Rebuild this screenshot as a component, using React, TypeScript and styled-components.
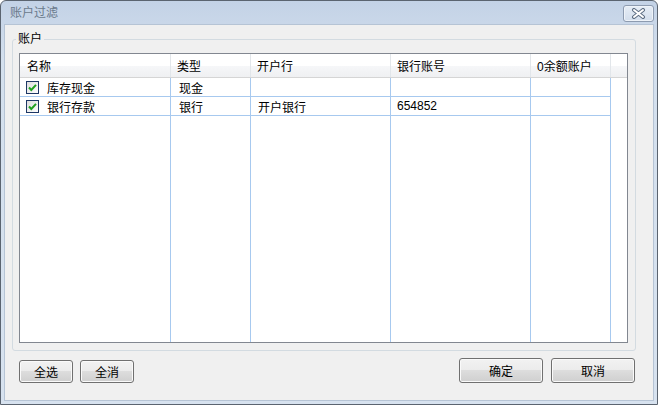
import React from 'react'
import styled, { createGlobalStyle } from 'styled-components'

const GlobalStyle = createGlobalStyle`
  html, body {
    margin: 0;
    padding: 0;
    background: #ffffff;
  }
  body {
    font-family: "Liberation Sans", "Noto Sans CJK SC", sans-serif;
    font-size: 12px;
    color: #000;
  }
`

const Window = styled.div`
  box-sizing: border-box;
  width: 658px;
  height: 405px;
  border: 1px solid #5b6470;
  border-radius: 6px 6px 0 0;
  background: linear-gradient(#c3d2e6, #d4e0ee 60px, #d7e2ef);
  padding: 0 3px 3px;
  display: flex;
  flex-direction: column;
`

const TitleBar = styled.div`
  height: 23px;
  display: flex;
  justify-content: space-between;
  align-items: flex-start;
  padding-left: 6px;
`

const Title = styled.span`
  margin-top: 5px;
  line-height: 14px;
  color: #6a798b;
`

const CloseButton = styled.div`
  box-sizing: border-box;
  width: 31px;
  height: 17px;
  margin-top: 4px;
  border: 1px solid #8d9bb0;
  border-radius: 3px;
  background: linear-gradient(#e6edf6, #d3deec);
  box-shadow: inset 0 0 0 1px #eef3f9;
  display: flex;
  align-items: center;
  justify-content: center;
`

const Client = styled.div`
  flex: 1;
  box-sizing: border-box;
  border: 1px solid #b6c4d5;
  background: #f0f0f0;
  padding: 7px 17px 0 7px;
  display: flex;
  flex-direction: column;
`

const Group = styled.fieldset`
  margin: 0;
  padding: 0;
  border: 1px solid #d3dbe1;
  border-radius: 3px;
  min-width: 0;
`

const Legend = styled.legend`
  margin-left: 3px;
  padding: 0 2px;
  line-height: 14px;
`

const ListView = styled.div`
  box-sizing: border-box;
  width: 609px;
  height: 290px;
  margin: 7px 7px 7px 6px;
  border: 1px solid #828790;
  background: #ffffff;
  display: flex;
  flex-direction: column;
`

const Header = styled.div`
  box-sizing: border-box;
  height: 24px;
  display: flex;
  border-bottom: 1px solid #d5d5d5;
  background: linear-gradient(#ffffff 0%, #ffffff 50%, #f6f7f9 50%, #eff0f2 100%);
`

const HeaderCell = styled.div<{ $w: number; $pad?: number }>`
  box-sizing: border-box;
  width: ${p => p.$w}px;
  padding-left: ${p => p.$pad ?? 6}px;
  border-right: 1px solid #e2e6ea;
  display: flex;
  align-items: center;
  white-space: nowrap;
`

const Body = styled.div`
  flex: 1;
  display: flex;
`

const Column = styled.div<{ $w: number }>`
  box-sizing: border-box;
  width: ${p => p.$w}px;
  border-right: 1px solid #a7c9ef;
  display: flex;
  flex-direction: column;
`

const Cell = styled.div<{ $pad?: number }>`
  box-sizing: border-box;
  height: 19px;
  padding-left: ${p => p.$pad ?? 7}px;
  border-bottom: 1px solid #a7c9ef;
  display: flex;
  align-items: center;
  white-space: nowrap;
`

const Check = styled.span`
  width: 13px;
  height: 13px;
  margin-right: 8px;
  display: inline-flex;
`

const Footer = styled.div`
  margin-top: 7px;
  padding: 0 1px 0 7px;
  display: flex;
  justify-content: space-between;
  align-items: flex-end;
`

const ButtonGroup = styled.div<{ $gap: number }>`
  display: flex;
  align-items: flex-end;
  gap: ${p => p.$gap}px;
`

const Button = styled.button<{ $w: number; $h: number }>`
  box-sizing: border-box;
  width: ${p => p.$w}px;
  height: ${p => p.$h}px;
  padding: 0;
  border: 1px solid #707070;
  border-radius: 3px;
  background: linear-gradient(#f2f2f2 0%, #ebebeb 50%, #dddddd 50%, #cfcfcf 100%);
  box-shadow: inset 0 0 0 1px #fafafa;
  font-family: "Liberation Sans", "Noto Sans CJK SC", sans-serif;
  font-size: 12px;
  color: #000;
`

const CheckIcon = () => (
  <svg width="13" height="13" viewBox="0 0 13 13">
    <defs>
      <linearGradient id="cb" x1="0" y1="0" x2="1" y2="1">
        <stop offset="0" stopColor="#dcdcdc" />
        <stop offset="1" stopColor="#ffffff" />
      </linearGradient>
    </defs>
    <rect x="0.5" y="0.5" width="12" height="12" fill="url(#cb)" stroke="#1d3765" />
    <path d="M3 6.5 L5.3 9 L10 3.8" fill="none" stroke="#21a121" strokeWidth="2" />
  </svg>
)

const CloseIcon = () => (
  <svg width="15" height="11" viewBox="0 0 15 11">
    <path d="M3 2 L12 9 M12 2 L3 9" stroke="#5c6c82" strokeWidth="4" strokeLinecap="round" />
    <path d="M3 2 L12 9 M12 2 L3 9" stroke="#ffffff" strokeWidth="2" strokeLinecap="round" />
  </svg>
)

const columns = [
  { title: '名称', w: 151 },
  { title: '类型', w: 80 },
  { title: '开户行', w: 140 },
  { title: '银行账号', w: 140 },
  { title: '0余额账户', w: 80 },
]

const accounts = [
  { name: '库存现金', type: '现金', bank: '', no: '', zero: '' },
  { name: '银行存款', type: '银行', bank: '开户银行', no: '654852', zero: '' },
]

export default function App() {
  return (
    <>
      <GlobalStyle />
      <Window>
        <TitleBar>
          <Title>账户过滤</Title>
          <CloseButton>
            <CloseIcon />
          </CloseButton>
        </TitleBar>
        <Client>
          <Group>
            <Legend>账户</Legend>
            <ListView>
              <Header>
                {columns.map((c, i) => (
                  <HeaderCell key={c.title} $w={c.w} $pad={i === 0 ? 7 : 6}>
                    {c.title}
                  </HeaderCell>
                ))}
              </Header>
              <Body>
                <Column $w={151}>
                  {accounts.map(a => (
                    <Cell key={a.name} $pad={6}>
                      <Check>
                        <CheckIcon />
                      </Check>
                      {a.name}
                    </Cell>
                  ))}
                </Column>
                <Column $w={80}>
                  {accounts.map(a => (
                    <Cell key={a.name} $pad={8}>{a.type}</Cell>
                  ))}
                </Column>
                <Column $w={140}>
                  {accounts.map(a => (
                    <Cell key={a.name}>{a.bank}</Cell>
                  ))}
                </Column>
                <Column $w={140}>
                  {accounts.map(a => (
                    <Cell key={a.name} $pad={6}>{a.no}</Cell>
                  ))}
                </Column>
                <Column $w={80}>
                  {accounts.map(a => (
                    <Cell key={a.name}>{a.zero}</Cell>
                  ))}
                </Column>
              </Body>
            </ListView>
          </Group>
          <Footer>
            <ButtonGroup $gap={7}>
              <Button $w={54} $h={23}>全选</Button>
              <Button $w={54} $h={23}>全消</Button>
            </ButtonGroup>
            <ButtonGroup $gap={8}>
              <Button $w={84} $h={25}>确定</Button>
              <Button $w={84} $h={25}>取消</Button>
            </ButtonGroup>
          </Footer>
        </Client>
      </Window>
    </>
  )
}
